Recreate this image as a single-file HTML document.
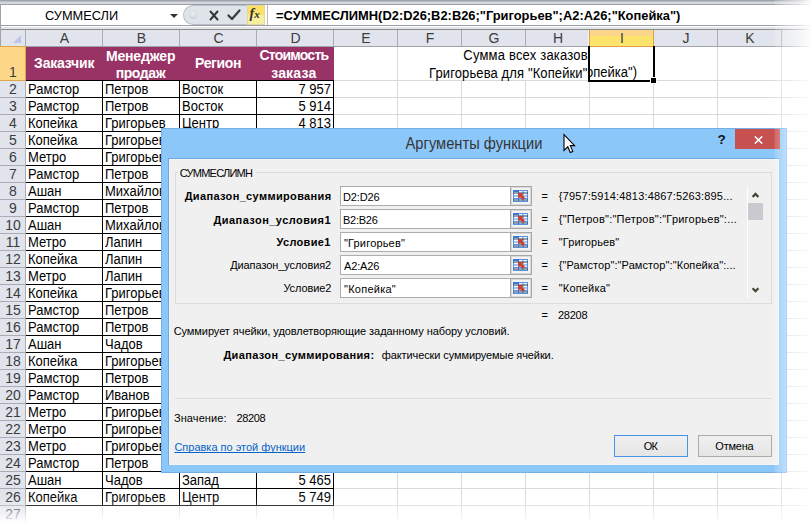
<!DOCTYPE html><html><head><meta charset="utf-8"><style>
*{margin:0;padding:0;box-sizing:border-box}
html,body{width:812px;height:525px;overflow:hidden;background:#fff}
body{position:relative;font-family:"Liberation Sans",sans-serif;color:#000}
.a{position:absolute}
.hl{position:absolute;height:1px}
.vl{position:absolute;width:1px}
.t{position:absolute;white-space:pre;font-size:13px;line-height:16px}
.hd{position:absolute;white-space:pre;font-size:13px;line-height:16px;color:#3c3c3c;text-align:center}
.ib{position:absolute;left:340px;width:192px;height:20px;border:1px solid #adadad;background:#fff}
.ib .btn{position:absolute;right:-1px;top:-1px;width:22px;height:20px;border:1px solid #a6a6a6;box-shadow:inset 0 0 0 1px #d9d9d9;background:#f3f3f3}
</style></head><body>
<div class="a" style="left:0;top:0;width:812px;height:4px;background:linear-gradient(#979ba2 0,#a5a9af 1px,#d0d3d8 2px,#d6d9de 4px)"></div>
<div class="a" style="left:0;top:4px;width:812px;height:22px;background:#fff;border-top:1px solid #9aa0a8;border-bottom:1px solid #989ea6"></div>
<div class="a" style="left:0;top:4px;width:1px;height:22px;background:#9ea2a9"></div>
<div class="a" style="left:0;top:26px;width:812px;height:3px;background:linear-gradient(#fcfcfd 0,#fcfcfd 1px,#e2e5eb 1px)"></div>
<div class="a" style="left:0;top:29px;width:812px;height:1px;background:#8b8a85"></div>
<div class="t" style="left:45px;top:8px;font-size:12.8px;color:#000">СУММЕСЛИ</div>
<div class="a" style="left:170px;top:13.5px;width:0;height:0;border-left:4px solid transparent;border-right:4px solid transparent;border-top:4px solid #333"></div>
<div class="a" style="left:183px;top:5px;width:64px;height:20px;background:#dfe3ea;border:1px solid #b9bec6;border-right:none;border-radius:10px 0 0 10px"></div>
<div class="a" style="left:189px;top:11px;width:8px;height:8px;border-radius:4px;background:radial-gradient(circle at 50% 35%,#f0f1f3,#c4c7cc)"></div>
<svg class="a" style="left:209px;top:10px" width="11" height="11" viewBox="0 0 11 11"><path d="M1.5 1.5 L8.5 9.5 M8.5 1.5 L1.5 9.5" stroke="#333" stroke-width="1.9" stroke-linecap="round"/></svg>
<svg class="a" style="left:227px;top:9px" width="14" height="12" viewBox="0 0 14 12"><path d="M1.5 6.5 L5 10 L12.5 1.5" fill="none" stroke="#3a3a3a" stroke-width="2.2" stroke-linecap="round" stroke-linejoin="round"/></svg>
<div class="a" style="left:247px;top:5px;width:18px;height:20px;background:linear-gradient(#fde068 0,#fde068 47%,#f7ef9e 53%,#f7ef9e 100%);border:1px solid #e6d89a"></div>
<div class="a" style="left:249.5px;top:5px;font:italic bold 14px 'Liberation Serif',serif;line-height:18px;color:#2e2e2e;white-space:pre">f<span style="font-size:11px">x</span></div>
<div class="a" style="left:267px;top:5px;width:1px;height:20px;background:#b5b9c0"></div>
<div class="t" style="left:276px;top:8px;font-weight:bold;font-size:12.9px">=СУММЕСЛИМН(D2:D26;B2:B26;"Григорьев";A2:A26;"Копейка")</div>
<div class="a" style="left:0;top:30px;width:812px;height:16px;background:#e1e4ec"></div>
<div class="a" style="left:0;top:46px;width:812px;height:1px;background:#9fa3ab"></div>
<div class="a" style="left:0;top:26px;width:1px;height:20px;background:#a0a4ab"></div>
<svg class="a" style="left:13px;top:35px" width="8" height="8"><path d="M8 0 L8 8 L0 8 Z" fill="#bcc6e8"/></svg>
<div class="vl" style="left:25px;top:30px;height:16px;background:#a9acb3"></div>
<div class="vl" style="left:102px;top:30px;height:16px;background:#a9acb3"></div>
<div class="vl" style="left:179px;top:30px;height:16px;background:#a9acb3"></div>
<div class="vl" style="left:256px;top:30px;height:16px;background:#a9acb3"></div>
<div class="vl" style="left:333px;top:30px;height:16px;background:#a9acb3"></div>
<div class="vl" style="left:397px;top:30px;height:16px;background:#a9acb3"></div>
<div class="vl" style="left:461px;top:30px;height:16px;background:#a9acb3"></div>
<div class="vl" style="left:525px;top:30px;height:16px;background:#a9acb3"></div>
<div class="vl" style="left:589px;top:30px;height:16px;background:#a9acb3"></div>
<div class="vl" style="left:653px;top:30px;height:16px;background:#a9acb3"></div>
<div class="vl" style="left:717px;top:30px;height:16px;background:#a9acb3"></div>
<div class="vl" style="left:781px;top:30px;height:16px;background:#a9acb3"></div>
<div class="a" style="left:588px;top:30px;width:1px;height:16px;background:#f4f5f8"></div>
<div class="hd" style="left:26px;top:30.2px;width:77px;line-height:16px;font-size:14px">A</div>
<div class="hd" style="left:103px;top:30.2px;width:77px;line-height:16px;font-size:14px">B</div>
<div class="hd" style="left:180px;top:30.2px;width:77px;line-height:16px;font-size:14px">C</div>
<div class="hd" style="left:257px;top:30.2px;width:77px;line-height:16px;font-size:14px">D</div>
<div class="hd" style="left:334px;top:30.2px;width:64px;line-height:16px;font-size:14px">E</div>
<div class="hd" style="left:398px;top:30.2px;width:64px;line-height:16px;font-size:14px">F</div>
<div class="hd" style="left:462px;top:30.2px;width:64px;line-height:16px;font-size:14px">G</div>
<div class="hd" style="left:526px;top:30.2px;width:64px;line-height:16px;font-size:14px">H</div>
<div class="a" style="left:589px;top:30px;width:65px;height:17px;background:linear-gradient(#fcd68a 0,#fcd68a 38%,#fde46c 40%,#fde46c 100%);border:1px solid #e3a043;border-top:none"></div>
<div class="hd" style="left:590px;top:30.2px;width:64px;line-height:16px;font-size:14px">I</div>
<div class="hd" style="left:654px;top:30.2px;width:64px;line-height:16px;font-size:14px">J</div>
<div class="hd" style="left:718px;top:30.2px;width:64px;line-height:16px;font-size:14px">K</div>
<div class="a" style="left:0;top:47px;width:25px;height:478px;background:#e1e4ec"></div>
<div class="a" style="left:25px;top:46px;width:1px;height:479px;background:#a9acb3"></div>
<div class="a" style="left:0;top:46px;width:26px;height:35px;background:#fdd889;border:1px solid #e3a54a;border-left:none"></div>
<div class="hd" style="left:0.5px;top:64.3px;width:25px;font-size:14px">1</div>
<div class="hl" style="left:0;top:97px;width:25px;background:#aaacb2"></div>
<div class="hd" style="left:0.5px;top:80.9px;width:25px;font-size:14px">2</div>
<div class="hl" style="left:0;top:114px;width:25px;background:#aaacb2"></div>
<div class="hd" style="left:0.5px;top:97.9px;width:25px;font-size:14px">3</div>
<div class="hl" style="left:0;top:131px;width:25px;background:#aaacb2"></div>
<div class="hd" style="left:0.5px;top:114.9px;width:25px;font-size:14px">4</div>
<div class="hl" style="left:0;top:148px;width:25px;background:#aaacb2"></div>
<div class="hd" style="left:0.5px;top:131.9px;width:25px;font-size:14px">5</div>
<div class="hl" style="left:0;top:165px;width:25px;background:#aaacb2"></div>
<div class="hd" style="left:0.5px;top:148.9px;width:25px;font-size:14px">6</div>
<div class="hl" style="left:0;top:182px;width:25px;background:#aaacb2"></div>
<div class="hd" style="left:0.5px;top:165.9px;width:25px;font-size:14px">7</div>
<div class="hl" style="left:0;top:199px;width:25px;background:#aaacb2"></div>
<div class="hd" style="left:0.5px;top:182.9px;width:25px;font-size:14px">8</div>
<div class="hl" style="left:0;top:216px;width:25px;background:#aaacb2"></div>
<div class="hd" style="left:0.5px;top:199.9px;width:25px;font-size:14px">9</div>
<div class="hl" style="left:0;top:233px;width:25px;background:#aaacb2"></div>
<div class="hd" style="left:0.5px;top:216.9px;width:25px;font-size:14px">10</div>
<div class="hl" style="left:0;top:250px;width:25px;background:#aaacb2"></div>
<div class="hd" style="left:0.5px;top:233.9px;width:25px;font-size:14px">11</div>
<div class="hl" style="left:0;top:267px;width:25px;background:#aaacb2"></div>
<div class="hd" style="left:0.5px;top:250.9px;width:25px;font-size:14px">12</div>
<div class="hl" style="left:0;top:284px;width:25px;background:#aaacb2"></div>
<div class="hd" style="left:0.5px;top:267.9px;width:25px;font-size:14px">13</div>
<div class="hl" style="left:0;top:301px;width:25px;background:#aaacb2"></div>
<div class="hd" style="left:0.5px;top:284.9px;width:25px;font-size:14px">14</div>
<div class="hl" style="left:0;top:318px;width:25px;background:#aaacb2"></div>
<div class="hd" style="left:0.5px;top:301.9px;width:25px;font-size:14px">15</div>
<div class="hl" style="left:0;top:335px;width:25px;background:#aaacb2"></div>
<div class="hd" style="left:0.5px;top:318.9px;width:25px;font-size:14px">16</div>
<div class="hl" style="left:0;top:352px;width:25px;background:#aaacb2"></div>
<div class="hd" style="left:0.5px;top:335.9px;width:25px;font-size:14px">17</div>
<div class="hl" style="left:0;top:369px;width:25px;background:#aaacb2"></div>
<div class="hd" style="left:0.5px;top:352.9px;width:25px;font-size:14px">18</div>
<div class="hl" style="left:0;top:386px;width:25px;background:#aaacb2"></div>
<div class="hd" style="left:0.5px;top:369.9px;width:25px;font-size:14px">19</div>
<div class="hl" style="left:0;top:403px;width:25px;background:#aaacb2"></div>
<div class="hd" style="left:0.5px;top:386.9px;width:25px;font-size:14px">20</div>
<div class="hl" style="left:0;top:420px;width:25px;background:#aaacb2"></div>
<div class="hd" style="left:0.5px;top:403.9px;width:25px;font-size:14px">21</div>
<div class="hl" style="left:0;top:437px;width:25px;background:#aaacb2"></div>
<div class="hd" style="left:0.5px;top:420.9px;width:25px;font-size:14px">22</div>
<div class="hl" style="left:0;top:454px;width:25px;background:#aaacb2"></div>
<div class="hd" style="left:0.5px;top:437.9px;width:25px;font-size:14px">23</div>
<div class="hl" style="left:0;top:471px;width:25px;background:#aaacb2"></div>
<div class="hd" style="left:0.5px;top:454.9px;width:25px;font-size:14px">24</div>
<div class="hl" style="left:0;top:488px;width:25px;background:#aaacb2"></div>
<div class="hd" style="left:0.5px;top:471.9px;width:25px;font-size:14px">25</div>
<div class="hl" style="left:0;top:505px;width:25px;background:#aaacb2"></div>
<div class="hd" style="left:0.5px;top:488.9px;width:25px;font-size:14px">26</div>
<div class="hl" style="left:0;top:522px;width:25px;background:#aaacb2"></div>
<div class="hd" style="left:0.5px;top:505.9px;width:25px;font-size:14px">27</div>
<div class="hl" style="left:334px;top:80px;width:478px;background:#d9d9d9"></div>
<div class="hl" style="left:334px;top:97px;width:478px;background:#d9d9d9"></div>
<div class="hl" style="left:334px;top:114px;width:478px;background:#d9d9d9"></div>
<div class="hl" style="left:334px;top:131px;width:478px;background:#d9d9d9"></div>
<div class="hl" style="left:334px;top:148px;width:478px;background:#d9d9d9"></div>
<div class="hl" style="left:334px;top:165px;width:478px;background:#d9d9d9"></div>
<div class="hl" style="left:334px;top:182px;width:478px;background:#d9d9d9"></div>
<div class="hl" style="left:334px;top:199px;width:478px;background:#d9d9d9"></div>
<div class="hl" style="left:334px;top:216px;width:478px;background:#d9d9d9"></div>
<div class="hl" style="left:334px;top:233px;width:478px;background:#d9d9d9"></div>
<div class="hl" style="left:334px;top:250px;width:478px;background:#d9d9d9"></div>
<div class="hl" style="left:334px;top:267px;width:478px;background:#d9d9d9"></div>
<div class="hl" style="left:334px;top:284px;width:478px;background:#d9d9d9"></div>
<div class="hl" style="left:334px;top:301px;width:478px;background:#d9d9d9"></div>
<div class="hl" style="left:334px;top:318px;width:478px;background:#d9d9d9"></div>
<div class="hl" style="left:334px;top:335px;width:478px;background:#d9d9d9"></div>
<div class="hl" style="left:334px;top:352px;width:478px;background:#d9d9d9"></div>
<div class="hl" style="left:334px;top:369px;width:478px;background:#d9d9d9"></div>
<div class="hl" style="left:334px;top:386px;width:478px;background:#d9d9d9"></div>
<div class="hl" style="left:334px;top:403px;width:478px;background:#d9d9d9"></div>
<div class="hl" style="left:334px;top:420px;width:478px;background:#d9d9d9"></div>
<div class="hl" style="left:334px;top:437px;width:478px;background:#d9d9d9"></div>
<div class="hl" style="left:334px;top:454px;width:478px;background:#d9d9d9"></div>
<div class="hl" style="left:334px;top:471px;width:478px;background:#d9d9d9"></div>
<div class="hl" style="left:334px;top:488px;width:478px;background:#d9d9d9"></div>
<div class="hl" style="left:334px;top:505px;width:478px;background:#d9d9d9"></div>
<div class="hl" style="left:334px;top:522px;width:478px;background:#d9d9d9"></div>
<div class="vl" style="left:397px;top:47px;height:478px;background:#d9d9d9"></div>
<div class="vl" style="left:461px;top:80px;height:445px;background:#d9d9d9"></div>
<div class="vl" style="left:525px;top:80px;height:445px;background:#d9d9d9"></div>
<div class="vl" style="left:589px;top:47px;height:478px;background:#d9d9d9"></div>
<div class="vl" style="left:653px;top:47px;height:478px;background:#d9d9d9"></div>
<div class="vl" style="left:717px;top:47px;height:478px;background:#d9d9d9"></div>
<div class="vl" style="left:781px;top:47px;height:478px;background:#d9d9d9"></div>
<div class="vl" style="left:102px;top:505px;height:20px;background:#d9d9d9"></div>
<div class="vl" style="left:179px;top:505px;height:20px;background:#d9d9d9"></div>
<div class="vl" style="left:256px;top:505px;height:20px;background:#d9d9d9"></div>
<div class="vl" style="left:333px;top:505px;height:20px;background:#d9d9d9"></div>
<div class="hl" style="left:26px;top:522px;width:308px;background:#d9d9d9"></div>
<div class="a" style="left:26px;top:47px;width:308px;height:33px;background:#993366"></div>
<div class="a" style="left:34.10px;top:54.85px;white-space:pre;font-size:14px;line-height:16px;font-weight:bold;letter-spacing:-0.186px;color:#fff">Заказчик</div>
<div class="a" style="left:105.90px;top:47.60px;white-space:pre;font-size:14px;line-height:16px;font-weight:bold;letter-spacing:-0.143px;color:#fff">Менеджер</div>
<div class="a" style="left:115.70px;top:64.50px;white-space:pre;font-size:14px;line-height:16px;font-weight:bold;letter-spacing:-0.420px;color:#fff">продаж</div>
<div class="a" style="left:195.00px;top:54.70px;white-space:pre;font-size:14px;line-height:16px;font-weight:bold;letter-spacing:-0.340px;color:#fff">Регион</div>
<div class="a" style="left:259.40px;top:46.80px;white-space:pre;font-size:14px;line-height:16px;font-weight:bold;letter-spacing:-0.750px;color:#fff">Стоимость</div>
<div class="a" style="left:271.20px;top:64.50px;white-space:pre;font-size:14px;line-height:16px;font-weight:bold;letter-spacing:0.180px;color:#fff">заказа</div>
<div class="a" style="left:26px;top:80px;width:308px;height:426px;background:#fff;border:1px solid #000;border-left:none"></div>
<div class="hl" style="left:26px;top:97px;width:308px;background:#000"></div>
<div class="hl" style="left:26px;top:114px;width:308px;background:#000"></div>
<div class="hl" style="left:26px;top:131px;width:308px;background:#000"></div>
<div class="hl" style="left:26px;top:148px;width:308px;background:#000"></div>
<div class="hl" style="left:26px;top:165px;width:308px;background:#000"></div>
<div class="hl" style="left:26px;top:182px;width:308px;background:#000"></div>
<div class="hl" style="left:26px;top:199px;width:308px;background:#000"></div>
<div class="hl" style="left:26px;top:216px;width:308px;background:#000"></div>
<div class="hl" style="left:26px;top:233px;width:308px;background:#000"></div>
<div class="hl" style="left:26px;top:250px;width:308px;background:#000"></div>
<div class="hl" style="left:26px;top:267px;width:308px;background:#000"></div>
<div class="hl" style="left:26px;top:284px;width:308px;background:#000"></div>
<div class="hl" style="left:26px;top:301px;width:308px;background:#000"></div>
<div class="hl" style="left:26px;top:318px;width:308px;background:#000"></div>
<div class="hl" style="left:26px;top:335px;width:308px;background:#000"></div>
<div class="hl" style="left:26px;top:352px;width:308px;background:#000"></div>
<div class="hl" style="left:26px;top:369px;width:308px;background:#000"></div>
<div class="hl" style="left:26px;top:386px;width:308px;background:#000"></div>
<div class="hl" style="left:26px;top:403px;width:308px;background:#000"></div>
<div class="hl" style="left:26px;top:420px;width:308px;background:#000"></div>
<div class="hl" style="left:26px;top:437px;width:308px;background:#000"></div>
<div class="hl" style="left:26px;top:454px;width:308px;background:#000"></div>
<div class="hl" style="left:26px;top:471px;width:308px;background:#000"></div>
<div class="hl" style="left:26px;top:488px;width:308px;background:#000"></div>
<div class="vl" style="left:102px;top:80px;height:426px;background:#000"></div>
<div class="vl" style="left:179px;top:80px;height:426px;background:#000"></div>
<div class="vl" style="left:256px;top:80px;height:426px;background:#000"></div>
<div class="t" style="left:28px;top:81.6px;transform:scaleY(1.07);transform-origin:0 13px">Рамстор</div>
<div class="t" style="left:105px;top:81.6px;transform:scaleY(1.07);transform-origin:0 13px">Петров</div>
<div class="t" style="left:182px;top:81.6px;transform:scaleY(1.07);transform-origin:0 13px">Восток</div>
<div class="t" style="left:256px;top:81.6px;width:75px;text-align:right;transform:scaleY(1.07);transform-origin:0 13px">7 957</div>
<div class="t" style="left:28px;top:98.6px;transform:scaleY(1.07);transform-origin:0 13px">Рамстор</div>
<div class="t" style="left:105px;top:98.6px;transform:scaleY(1.07);transform-origin:0 13px">Петров</div>
<div class="t" style="left:182px;top:98.6px;transform:scaleY(1.07);transform-origin:0 13px">Восток</div>
<div class="t" style="left:256px;top:98.6px;width:75px;text-align:right;transform:scaleY(1.07);transform-origin:0 13px">5 914</div>
<div class="t" style="left:28px;top:115.6px;transform:scaleY(1.07);transform-origin:0 13px">Копейка</div>
<div class="t" style="left:105px;top:115.6px;transform:scaleY(1.07);transform-origin:0 13px">Григорьев</div>
<div class="t" style="left:182px;top:115.6px;transform:scaleY(1.07);transform-origin:0 13px">Центр</div>
<div class="t" style="left:256px;top:115.6px;width:75px;text-align:right;transform:scaleY(1.07);transform-origin:0 13px">4 813</div>
<div class="t" style="left:28px;top:132.6px;transform:scaleY(1.07);transform-origin:0 13px">Копейка</div>
<div class="t" style="left:105px;top:132.6px;transform:scaleY(1.07);transform-origin:0 13px">Григорьев</div>
<div class="t" style="left:28px;top:149.6px;transform:scaleY(1.07);transform-origin:0 13px">Метро</div>
<div class="t" style="left:105px;top:149.6px;transform:scaleY(1.07);transform-origin:0 13px">Григорьев</div>
<div class="t" style="left:28px;top:166.6px;transform:scaleY(1.07);transform-origin:0 13px">Рамстор</div>
<div class="t" style="left:105px;top:166.6px;transform:scaleY(1.07);transform-origin:0 13px">Петров</div>
<div class="t" style="left:28px;top:183.6px;transform:scaleY(1.07);transform-origin:0 13px">Ашан</div>
<div class="t" style="left:105px;top:183.6px;transform:scaleY(1.07);transform-origin:0 13px">Михайлов</div>
<div class="t" style="left:28px;top:200.6px;transform:scaleY(1.07);transform-origin:0 13px">Рамстор</div>
<div class="t" style="left:105px;top:200.6px;transform:scaleY(1.07);transform-origin:0 13px">Петров</div>
<div class="t" style="left:28px;top:217.6px;transform:scaleY(1.07);transform-origin:0 13px">Ашан</div>
<div class="t" style="left:105px;top:217.6px;transform:scaleY(1.07);transform-origin:0 13px">Михайлов</div>
<div class="t" style="left:28px;top:234.6px;transform:scaleY(1.07);transform-origin:0 13px">Метро</div>
<div class="t" style="left:105px;top:234.6px;transform:scaleY(1.07);transform-origin:0 13px">Лапин</div>
<div class="t" style="left:28px;top:251.6px;transform:scaleY(1.07);transform-origin:0 13px">Копейка</div>
<div class="t" style="left:105px;top:251.6px;transform:scaleY(1.07);transform-origin:0 13px">Лапин</div>
<div class="t" style="left:28px;top:268.6px;transform:scaleY(1.07);transform-origin:0 13px">Метро</div>
<div class="t" style="left:105px;top:268.6px;transform:scaleY(1.07);transform-origin:0 13px">Лапин</div>
<div class="t" style="left:28px;top:285.6px;transform:scaleY(1.07);transform-origin:0 13px">Копейка</div>
<div class="t" style="left:105px;top:285.6px;transform:scaleY(1.07);transform-origin:0 13px">Григорьев</div>
<div class="t" style="left:28px;top:302.6px;transform:scaleY(1.07);transform-origin:0 13px">Рамстор</div>
<div class="t" style="left:105px;top:302.6px;transform:scaleY(1.07);transform-origin:0 13px">Петров</div>
<div class="t" style="left:28px;top:319.6px;transform:scaleY(1.07);transform-origin:0 13px">Рамстор</div>
<div class="t" style="left:105px;top:319.6px;transform:scaleY(1.07);transform-origin:0 13px">Петров</div>
<div class="t" style="left:28px;top:336.6px;transform:scaleY(1.07);transform-origin:0 13px">Ашан</div>
<div class="t" style="left:105px;top:336.6px;transform:scaleY(1.07);transform-origin:0 13px">Чадов</div>
<div class="t" style="left:28px;top:353.6px;transform:scaleY(1.07);transform-origin:0 13px">Копейка</div>
<div class="t" style="left:105px;top:353.6px;transform:scaleY(1.07);transform-origin:0 13px">Григорьев</div>
<div class="t" style="left:28px;top:370.6px;transform:scaleY(1.07);transform-origin:0 13px">Рамстор</div>
<div class="t" style="left:105px;top:370.6px;transform:scaleY(1.07);transform-origin:0 13px">Петров</div>
<div class="t" style="left:28px;top:387.6px;transform:scaleY(1.07);transform-origin:0 13px">Рамстор</div>
<div class="t" style="left:105px;top:387.6px;transform:scaleY(1.07);transform-origin:0 13px">Иванов</div>
<div class="t" style="left:28px;top:404.6px;transform:scaleY(1.07);transform-origin:0 13px">Метро</div>
<div class="t" style="left:105px;top:404.6px;transform:scaleY(1.07);transform-origin:0 13px">Григорьев</div>
<div class="t" style="left:28px;top:421.6px;transform:scaleY(1.07);transform-origin:0 13px">Метро</div>
<div class="t" style="left:105px;top:421.6px;transform:scaleY(1.07);transform-origin:0 13px">Григорьев</div>
<div class="t" style="left:28px;top:438.6px;transform:scaleY(1.07);transform-origin:0 13px">Метро</div>
<div class="t" style="left:105px;top:438.6px;transform:scaleY(1.07);transform-origin:0 13px">Григорьев</div>
<div class="t" style="left:28px;top:455.6px;transform:scaleY(1.07);transform-origin:0 13px">Рамстор</div>
<div class="t" style="left:105px;top:455.6px;transform:scaleY(1.07);transform-origin:0 13px">Петров</div>
<div class="t" style="left:28px;top:472.6px;transform:scaleY(1.07);transform-origin:0 13px">Ашан</div>
<div class="t" style="left:105px;top:472.6px;transform:scaleY(1.07);transform-origin:0 13px">Чадов</div>
<div class="t" style="left:182px;top:472.6px;transform:scaleY(1.07);transform-origin:0 13px">Запад</div>
<div class="t" style="left:256px;top:472.6px;width:75px;text-align:right;transform:scaleY(1.07);transform-origin:0 13px">5 465</div>
<div class="t" style="left:28px;top:489.6px;transform:scaleY(1.07);transform-origin:0 13px">Копейка</div>
<div class="t" style="left:105px;top:489.6px;transform:scaleY(1.07);transform-origin:0 13px">Григорьев</div>
<div class="t" style="left:182px;top:489.6px;transform:scaleY(1.07);transform-origin:0 13px">Центр</div>
<div class="t" style="left:256px;top:489.6px;width:75px;text-align:right;transform:scaleY(1.07);transform-origin:0 13px">5 749</div>
<div class="a" style="left:463.30px;top:48.40px;white-space:pre;font-size:13px;line-height:16px;letter-spacing:0.200px;transform:scaleY(1.08);transform-origin:0 12px;">Сумма всех заказов</div>
<div class="a" style="left:429.00px;top:66.00px;white-space:pre;font-size:13px;line-height:16px;letter-spacing:0.117px;transform:scaleY(1.08);transform-origin:0 12px;">Григорьева для "Копейки"</div>
<div class="a" style="left:590px;top:47px;width:63px;height:33px;overflow:hidden"><div class="t" style="right:16px;top:16.5px;line-height:17px;transform:scaleY(1.07);transform-origin:0 13px">Копейка")</div></div>
<div class="a" style="left:588px;top:46px;width:67px;height:36px;border:2px solid #000;border-top:none"></div>
<div class="a" style="left:650px;top:77px;width:7px;height:7px;background:#000;border:1px solid #fff"></div>
<div class="a" style="left:161px;top:128px;width:626px;height:345px;background:#8cc7fa;border:1px solid #74aee6"></div>
<div class="a" style="left:161px;top:136px;width:626px;text-align:center;font-size:14.7px;line-height:17px;color:#363636;white-space:pre;transform:scaleY(1.07);transform-origin:0 13px">Аргументы функции</div>
<div class="a" style="left:717.5px;top:132.5px;font-weight:bold;font-size:13.5px;line-height:14px;color:#111">?</div>
<div class="a" style="left:735px;top:129px;width:45px;height:20px;background:#c75050"></div>
<svg class="a" style="left:754px;top:135.5px" width="9" height="8" viewBox="0 0 9 8"><path d="M0.8 0.4 L8.2 7.6 M8.2 0.4 L0.8 7.6" stroke="#fff" stroke-width="1.5"/></svg>
<div class="a" style="left:168px;top:158px;width:611px;height:307px;background:#f0f0f0;border-left:1px solid #6aaae6;border-top:1px solid #6aaae6;box-shadow:inset 1px 1px 0 #f7f3ef,inset -1px -1px 0 #f7f3ef"></div>
<div class="a" style="left:175px;top:172px;width:597px;height:132px;border:1px solid #dcdcdc"></div>
<div class="a" style="left:178px;top:166px;width:77px;height:12px;background:#f0f0f0"></div>
<div class="a" style="left:179.80px;top:166.80px;white-space:pre;font-size:11px;line-height:13px;letter-spacing:-0.767px;">СУММЕСЛИМН</div>
<div class="a" style="left:184.70px;top:189.90px;white-space:pre;font-size:11px;line-height:13px;font-weight:bold;letter-spacing:0.350px;">Диапазон_суммирования</div>
<div class="ib" style="top:186px"><div class="btn"><svg width="15" height="12" style="position:absolute;left:2px;top:3px" viewBox="0 0 15 12"><rect x="0" y="0" width="15" height="12" fill="#f4f7fc"/><path d="M0 0.5H15M0 6H15M0 8.5H15M0 11.5H15M0.5 0V12M14.5 0V12M5.5 0V12M10 0V12" stroke="#5a90dc" stroke-width="1"/><path d="M0 3H15M0 10H15" stroke="#2b4a70" stroke-width="1"/><rect x="0" y="0" width="6" height="2" fill="#3b78d4"/><path d="M5.5 3.2 L10.2 3.6 L8.8 5 L11.6 7.8 L9.8 9.6 L7 6.8 L5.8 8 Z" fill="#df3b22" stroke="#b8281a" stroke-width="0.5"/></svg></div></div>
<div class="a" style="left:343.00px;top:191.00px;white-space:pre;font-size:11px;line-height:13px;letter-spacing:-0.140px;">D2:D26</div>
<div class="a" style="left:541.60px;top:190.00px;white-space:pre;font-size:11px;line-height:13px;letter-spacing:0.000px;">=</div>
<div class="a" style="left:558.80px;top:189.80px;white-space:pre;font-size:11px;line-height:13px;letter-spacing:0.161px;">{7957:5914:4813:4867:5263:895...</div>
<div class="a" style="left:213.50px;top:213.70px;white-space:pre;font-size:11px;line-height:13px;font-weight:bold;letter-spacing:0.450px;">Диапазон_условия1</div>
<div class="ib" style="top:209px"><div class="btn"><svg width="15" height="12" style="position:absolute;left:2px;top:3px" viewBox="0 0 15 12"><rect x="0" y="0" width="15" height="12" fill="#f4f7fc"/><path d="M0 0.5H15M0 6H15M0 8.5H15M0 11.5H15M0.5 0V12M14.5 0V12M5.5 0V12M10 0V12" stroke="#5a90dc" stroke-width="1"/><path d="M0 3H15M0 10H15" stroke="#2b4a70" stroke-width="1"/><rect x="0" y="0" width="6" height="2" fill="#3b78d4"/><path d="M5.5 3.2 L10.2 3.6 L8.8 5 L11.6 7.8 L9.8 9.6 L7 6.8 L5.8 8 Z" fill="#df3b22" stroke="#b8281a" stroke-width="0.5"/></svg></div></div>
<div class="a" style="left:343.00px;top:214.00px;white-space:pre;font-size:11px;line-height:13px;letter-spacing:-0.260px;">B2:B26</div>
<div class="a" style="left:541.60px;top:213.00px;white-space:pre;font-size:11px;line-height:13px;letter-spacing:0.000px;">=</div>
<div class="a" style="left:558.80px;top:212.80px;white-space:pre;font-size:11px;line-height:13px;letter-spacing:0.233px;">{"Петров":"Петров":"Григорьев":...</div>
<div class="a" style="left:276.60px;top:235.80px;white-space:pre;font-size:11px;line-height:13px;font-weight:bold;letter-spacing:0.300px;">Условие1</div>
<div class="ib" style="top:232px"><div class="btn"><svg width="15" height="12" style="position:absolute;left:2px;top:3px" viewBox="0 0 15 12"><rect x="0" y="0" width="15" height="12" fill="#f4f7fc"/><path d="M0 0.5H15M0 6H15M0 8.5H15M0 11.5H15M0.5 0V12M14.5 0V12M5.5 0V12M10 0V12" stroke="#5a90dc" stroke-width="1"/><path d="M0 3H15M0 10H15" stroke="#2b4a70" stroke-width="1"/><rect x="0" y="0" width="6" height="2" fill="#3b78d4"/><path d="M5.5 3.2 L10.2 3.6 L8.8 5 L11.6 7.8 L9.8 9.6 L7 6.8 L5.8 8 Z" fill="#df3b22" stroke="#b8281a" stroke-width="0.5"/></svg></div></div>
<div class="a" style="left:344.00px;top:237.00px;white-space:pre;font-size:11px;line-height:13px;letter-spacing:0.170px;">"Григорьев"</div>
<div class="a" style="left:541.60px;top:236.00px;white-space:pre;font-size:11px;line-height:13px;letter-spacing:0.000px;">=</div>
<div class="a" style="left:558.80px;top:235.80px;white-space:pre;font-size:11px;line-height:13px;letter-spacing:0.120px;">"Григорьев"</div>
<div class="a" style="left:230.20px;top:259.00px;white-space:pre;font-size:11px;line-height:13px;letter-spacing:-0.094px;">Диапазон_условия2</div>
<div class="ib" style="top:255px"><div class="btn"><svg width="15" height="12" style="position:absolute;left:2px;top:3px" viewBox="0 0 15 12"><rect x="0" y="0" width="15" height="12" fill="#f4f7fc"/><path d="M0 0.5H15M0 6H15M0 8.5H15M0 11.5H15M0.5 0V12M14.5 0V12M5.5 0V12M10 0V12" stroke="#5a90dc" stroke-width="1"/><path d="M0 3H15M0 10H15" stroke="#2b4a70" stroke-width="1"/><rect x="0" y="0" width="6" height="2" fill="#3b78d4"/><path d="M5.5 3.2 L10.2 3.6 L8.8 5 L11.6 7.8 L9.8 9.6 L7 6.8 L5.8 8 Z" fill="#df3b22" stroke="#b8281a" stroke-width="0.5"/></svg></div></div>
<div class="a" style="left:344.00px;top:260.00px;white-space:pre;font-size:11px;line-height:13px;letter-spacing:-0.140px;">A2:A26</div>
<div class="a" style="left:541.60px;top:259.00px;white-space:pre;font-size:11px;line-height:13px;letter-spacing:0.000px;">=</div>
<div class="a" style="left:558.80px;top:258.80px;white-space:pre;font-size:11px;line-height:13px;letter-spacing:0.088px;">{"Рамстор":"Рамстор":"Копейка":...</div>
<div class="a" style="left:283.40px;top:281.70px;white-space:pre;font-size:11px;line-height:13px;letter-spacing:-0.100px;">Условие2</div>
<div class="ib" style="top:278px"><div class="btn"><svg width="15" height="12" style="position:absolute;left:2px;top:3px" viewBox="0 0 15 12"><rect x="0" y="0" width="15" height="12" fill="#f4f7fc"/><path d="M0 0.5H15M0 6H15M0 8.5H15M0 11.5H15M0.5 0V12M14.5 0V12M5.5 0V12M10 0V12" stroke="#5a90dc" stroke-width="1"/><path d="M0 3H15M0 10H15" stroke="#2b4a70" stroke-width="1"/><rect x="0" y="0" width="6" height="2" fill="#3b78d4"/><path d="M5.5 3.2 L10.2 3.6 L8.8 5 L11.6 7.8 L9.8 9.6 L7 6.8 L5.8 8 Z" fill="#df3b22" stroke="#b8281a" stroke-width="0.5"/></svg></div></div>
<div class="a" style="left:344.00px;top:283.00px;white-space:pre;font-size:11px;line-height:13px;letter-spacing:0.250px;">"Копейка"</div>
<div class="a" style="left:541.60px;top:282.00px;white-space:pre;font-size:11px;line-height:13px;letter-spacing:0.000px;">=</div>
<div class="a" style="left:558.80px;top:281.80px;white-space:pre;font-size:11px;line-height:13px;letter-spacing:0.163px;">"Копейка"</div>
<div class="a" style="left:747px;top:186px;width:1px;height:112px;background:#fff"></div>
<div class="a" style="left:748px;top:203px;width:15px;height:17px;background:#c9cacf"></div>
<svg class="a" style="left:751px;top:192px" width="9" height="6"><path d="M1.6 5 L4.5 2 L7.4 5" fill="none" stroke="#47443a" stroke-width="2.3"/></svg>
<svg class="a" style="left:751px;top:287px" width="9" height="6"><path d="M1.6 1.2 L4.5 4.2 L7.4 1.2" fill="none" stroke="#47443a" stroke-width="2.3"/></svg>
<div class="a" style="left:541.60px;top:308.70px;white-space:pre;font-size:11px;line-height:13px;letter-spacing:0.000px;">=</div>
<div class="a" style="left:558.00px;top:308.70px;white-space:pre;font-size:11px;line-height:13px;letter-spacing:-0.250px;">28208</div>
<div class="a" style="left:173.70px;top:325.00px;white-space:pre;font-size:11px;line-height:13px;letter-spacing:-0.067px;">Суммирует ячейки, удовлетворяющие заданному набору условий.</div>
<div class="a" style="left:223.40px;top:348.80px;white-space:pre;font-size:11px;line-height:13px;font-weight:bold;letter-spacing:0.362px;">Диапазон_суммирования:</div>
<div class="a" style="left:381.80px;top:348.50px;white-space:pre;font-size:11px;line-height:13px;letter-spacing:-0.103px;">фактически суммируемые ячейки.</div>
<div class="a" style="left:175px;top:398px;width:597px;height:1px;background:#dcdcdc"></div>
<div class="a" style="left:174.00px;top:411.80px;white-space:pre;font-size:11px;line-height:13px;letter-spacing:0.075px;">Значение:</div>
<div class="a" style="left:236.40px;top:411.80px;white-space:pre;font-size:11px;line-height:13px;letter-spacing:-0.350px;">28208</div>
<div class="a" style="left:174.40px;top:441.00px;white-space:pre;font-size:11px;line-height:13px;letter-spacing:-0.005px;color:#0563c8;text-decoration:underline;text-decoration-skip-ink:none">Справка по этой функции</div>
<div class="a" style="left:614px;top:435px;width:74px;height:22px;border:1px solid #4a94e8;background:linear-gradient(#f0f0f0,#e5e5e5)"></div>
<div class="a" style="left:698px;top:435px;width:74px;height:22px;border:1px solid #acacac;background:linear-gradient(#f0f0f0,#e5e5e5)"></div>
<div class="a" style="left:643.80px;top:440.00px;white-space:pre;font-size:11px;line-height:13px;letter-spacing:-0.900px;">ОК</div>
<div class="a" style="left:715.30px;top:440.00px;white-space:pre;font-size:11px;line-height:13px;letter-spacing:-0.220px;">Отмена</div>
<svg class="a" style="left:562px;top:133px" width="16" height="22" viewBox="0 0 16 22"><path d="M2 1.5 L2 17.5 L5.8 13.8 L8.3 19.5 L10.8 18.4 L8.3 12.6 L12.6 12.6 Z" fill="#fff" stroke="#000" stroke-width="1.1" stroke-linejoin="miter"/></svg>
<div class="a" style="left:774px;top:0;width:38px;height:525px;background:linear-gradient(90deg,rgba(255,255,255,0) 0px,rgba(255,255,255,.15) 1px,rgba(255,255,255,.28) 7px,rgba(255,255,255,.42) 12px,rgba(255,255,255,.55) 21px,rgba(255,255,255,.7) 28px,rgba(255,255,255,.86) 34px,rgba(255,255,255,1) 38px)"></div>
<div class="a" style="left:0;top:495px;width:812px;height:30px;background:linear-gradient(rgba(255,255,255,0) 0px,rgba(255,255,255,.12) 8px,rgba(255,255,255,.35) 14px,rgba(255,255,255,.6) 20px,rgba(255,255,255,.85) 25px,rgba(255,255,255,1) 28px)"></div>
</body></html>
